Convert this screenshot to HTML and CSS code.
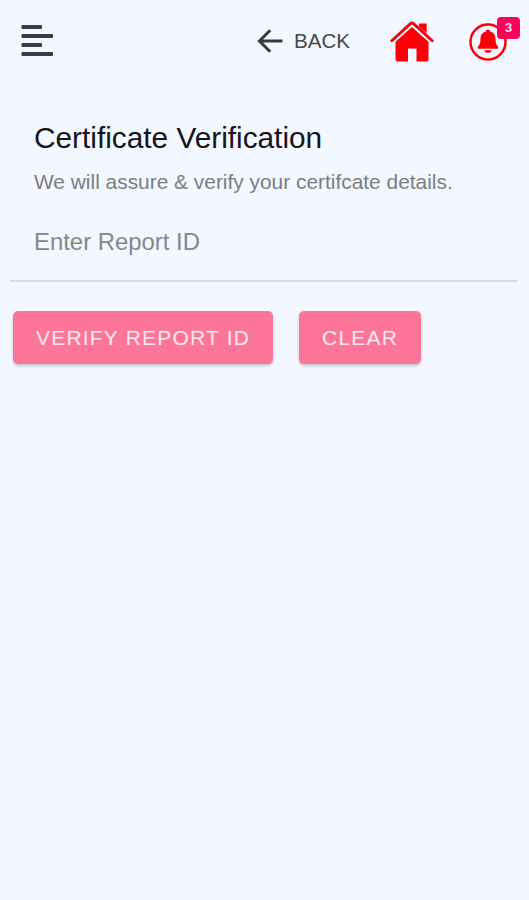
FILE: index.html
```html
<!DOCTYPE html>
<html lang="en">
<head>
  <meta charset="UTF-8" />
  <meta name="viewport" content="width=device-width, initial-scale=1.0"/>
  <title>Certificate Verification</title>
  <link rel="stylesheet" href="styles.css">
</head>
<body>
  <header class="topbar">
    <button class="icon-btn menu-btn" aria-label="Menu">
      <svg width="32" height="34" viewBox="0 0 32 34" fill="#3a3c3d">
        <rect x="0.5" y="1" width="20.5" height="4" rx="1"/>
        <rect x="0.5" y="10" width="31.500" height="4" rx="1"/>
        <rect x="0.5" y="19" width="20.5" height="4" rx="1"/>
        <rect x="0.5" y="28" width="31.500" height="4" rx="1"/>
      </svg>
    </button>
    <button class="icon-btn back-btn">
      <svg width="26" height="26" viewBox="0 0 26 26" fill="none" stroke="#3a3a3c" stroke-width="3">
        <path d="M13.2 2.2L2.4 13l10.8 10.8M2.4 13H25.500"/>
      </svg>
      <span>BACK</span>
    </button>
    <button class="icon-btn home-btn" aria-label="Home">
      <svg width="44" height="42" viewBox="0 0 44 42" fill="#fb0007">
        <path d="M29 2.5h7.7v13L29 8.5z"/>
        <path d="M5.5 20.5L22 5.5l16.5 15V38.5a2 2 0 0 1-2 2H26.500V27.500h-8.500v13H7.500a2 2 0 0 1-2-2z"/>
        <path d="M1.8 20.7L22 2.6l20.2 18.1" fill="none" stroke="#f3f7ff" stroke-width="5"/>
        <path d="M1.8 19.7L20.5 2.6q1.5-1.300 3 0l18.7 17.1" fill="none" stroke="#fb0007" stroke-width="2.9" stroke-linecap="round"/>
      </svg>
    </button>
    <button class="icon-btn bell-btn" aria-label="Notifications">
      <svg width="38" height="38" viewBox="0 0 38 38" fill="#fb0007">
        <circle cx="19" cy="19" r="17.5" fill="none" stroke="#fb0007" stroke-width="2.5"/>
        <path d="M19 6.5c1.300 0 2 .8 2.100 2 3.600.8 5.400 3.500 5.400 7 0 4.500 1 6.700 2.800 8.500v1.800H8.700V24c1.800-1.800 2.800-4 2.800-8.500 0-3.500 1.800-6.200 5.400-7 .1-1.200.8-2 2.100-2z"/>
        <path d="M15.600 27.200h6.800a3.400 2.600 0 0 1-6.800 0z"/>
      </svg>
      <span class="badge">3</span>
    </button>
  </header>

  <main>
    <h1>Certificate Verification</h1>
    <p class="subtitle">We will assure &amp; verify your certifcate details.</p>
    <input type="text" class="report-input" placeholder="Enter Report ID">
    <div class="button-group">
      <button class="btn">VERIFY REPORT ID</button>
      <button class="btn">CLEAR</button>
    </div>
  </main>
</body>
</html>
```
FILE: styles.css
```css
*{margin:0;padding:0;box-sizing:border-box;font-family:"Liberation Sans",Arial,sans-serif;}
body{background:#f3f7ff;min-height:100vh;}
.topbar{display:flex;align-items:center;height:83px;padding:0 22px 0 21px;}
.icon-btn{display:flex;align-items:center;border:none;background:none;cursor:pointer;}
.icon-btn svg{display:block;}
.menu-btn{margin-bottom:2px;}
.back-btn{margin-left:auto;margin-bottom:2px;gap:11px;font-size:20.6px;color:#48484a;}
.home-btn{margin-left:40px;}
.bell-btn{position:relative;margin-left:35px;}
.badge{position:absolute;top:-6px;right:-13px;width:23px;height:22px;border-radius:4px;background:#fb0058;color:#ffd9e6;font-size:13px;font-weight:bold;line-height:22px;text-align:center;}
main{padding:37px 12px 0 10px;}
h1{padding:0 24px;font-size:29.8px;font-weight:400;line-height:36px;color:#151519;}
.subtitle{margin-top:13px;padding:0 24px;font-size:20.9px;line-height:26px;color:#7b7d82;}
.report-input{display:block;width:100%;height:81px;margin-top:6px;padding:3px 24px 0;border:none;border-bottom:2px solid #dadde8;background:none;font-size:23.9px;outline:none;}
.report-input::placeholder{color:#85878d;opacity:1;}
.button-group{display:flex;gap:26px;margin-top:29px;padding-left:3px;}
.btn{height:53px;padding:0 23px;border:none;border-radius:5px;background:#fd7599;color:#ffeaf1;font-size:21px;letter-spacing:1.2px;cursor:pointer;box-shadow:0 2px 3px rgba(0,0,0,.2);}
```
